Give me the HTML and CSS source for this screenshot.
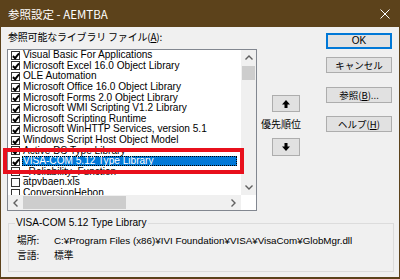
FILE: index.html
```html
<!DOCTYPE html>
<html lang="ja">
<head>
    <meta charset="UTF-8">
    <title>参照設定 - AEMTBA</title>
    <link rel="stylesheet" href="styles.css">
</head>
<body>
    <div class="window">
        <div class="titlebar">
            <span class="title">参照設定 - AEMTBA</span>
            <svg class="close" width="10" height="10" viewBox="0 0 10 10">
                <path d="M0.5 0.5 L9.5 9.5 M9.5 0.5 L0.5 9.5" stroke="#fff" stroke-width="1" fill="none"/>
            </svg>
        </div>

        <div class="content">
            <div class="main">
                <div class="left">
                    <div class="list-label">参照可能なライブラリ ファイル(<u>A</u>):</div>
                    <div class="listbox">
                        <div class="list-top">
                            <div class="rows">
                                <div class="row"><span class="check on"></span><span class="item">Visual Basic For Applications</span></div>
                                <div class="row"><span class="check on"></span><span class="item">Microsoft Excel 16.0 Object Library</span></div>
                                <div class="row"><span class="check on"></span><span class="item">OLE Automation</span></div>
                                <div class="row"><span class="check on"></span><span class="item">Microsoft Office 16.0 Object Library</span></div>
                                <div class="row"><span class="check on"></span><span class="item">Microsoft Forms 2.0 Object Library</span></div>
                                <div class="row"><span class="check on"></span><span class="item">Microsoft WMI Scripting V1.2 Library</span></div>
                                <div class="row"><span class="check on"></span><span class="item">Microsoft Scripting Runtime</span></div>
                                <div class="row"><span class="check on"></span><span class="item">Microsoft WinHTTP Services, version 5.1</span></div>
                                <div class="row"><span class="check on"></span><span class="item">Windows Script Host Object Model</span></div>
                                <div class="row"><span class="check on"></span><span class="item">Active DS Type Library</span></div>
                                <div class="row selected"><span class="check on"></span><span class="item">VISA-COM 5.12 Type Library</span></div>
                                <div class="row"><span class="check"></span><span class="item">_Reliability_Function</span></div>
                                <div class="row"><span class="check"></span><span class="item">atpvbaen.xls</span></div>
                                <div class="row"><span class="check"></span><span class="item">ConversionHebon</span></div>
                            </div>
                            <div class="vscroll">
                                <div class="arrow">
                                    <svg width="8" height="5" viewBox="0 0 8 5"><path d="M0.5 4.5 L4 1 L7.5 4.5" stroke="#606060" stroke-width="1.4" fill="none"/></svg>
                                </div>
                                <div class="vthumb"></div>
                                <div class="vspace"></div>
                                <div class="arrow">
                                    <svg width="8" height="5" viewBox="0 0 8 5"><path d="M0.5 0.5 L4 4 L7.5 0.5" stroke="#606060" stroke-width="1.4" fill="none"/></svg>
                                </div>
                            </div>
                        </div>
                        <div class="hscroll">
                            <div class="arrow">
                                <svg width="5" height="8" viewBox="0 0 5 8"><path d="M4.5 0.5 L1 4 L4.5 7.5" stroke="#606060" stroke-width="1.4" fill="none"/></svg>
                            </div>
                            <div class="hthumb"></div>
                            <div class="hspace"></div>
                            <div class="arrow">
                                <svg width="5" height="8" viewBox="0 0 5 8"><path d="M0.5 0.5 L4 4 L0.5 7.5" stroke="#606060" stroke-width="1.4" fill="none"/></svg>
                            </div>
                            <div class="corner"></div>
                        </div>
                    </div>
                </div>

                <div class="priority">
                    <button class="btn move">
                        <svg width="8" height="8" viewBox="0 0 8 8"><path d="M4 0 L8 4.5 H5.5 V8 H2.5 V4.5 H0 Z" fill="#000"/></svg>
                    </button>
                    <div class="priority-label">優先順位</div>
                    <button class="btn move down">
                        <svg width="8" height="8" viewBox="0 0 8 8"><path d="M4 8 L8 3.5 H5.5 V0 H2.5 V3.5 H0 Z" fill="#000"/></svg>
                    </button>
                </div>

                <div class="buttons">
                    <button class="btn default">OK</button>
                    <button class="btn cancel">キャンセル</button>
                    <button class="btn browse">参照(<u>B</u>)...</button>
                    <button class="btn help">ヘルプ(<u>H</u>)</button>
                </div>
            </div>

            <fieldset class="info">
                <legend>VISA-COM 5.12 Type Library</legend>
                <div class="info-row"><span class="info-key">場所:</span><span>C:¥Program Files (x86)¥IVI Foundation¥VISA¥VisaCom¥GlobMgr.dll</span></div>
                <div class="info-row"><span class="info-key">言語:</span><span>標準</span></div>
            </fieldset>
        </div>

        <!-- annotation drawn over the screenshot -->
        <div class="mark"></div>
    </div>
</body>
</html>
```

FILE: styles.css
```css
:root {
    --frame: #5c421b;
    --face: #f0f0f0;
    --btn: #e1e1e1;
    --btn-border: #adadad;
    --select: #0078d7;
    --mark: #e8101c;
}

* {
    box-sizing: border-box;
    margin: 0;
    padding: 0;
}

body {
    width: 400px;
    height: 279px;
    overflow: hidden;
    font-family: "Liberation Sans", "Noto Sans CJK JP", sans-serif;
    font-size: 10px;
    color: #000;
}

.window {
    position: relative;
    width: 400px;
    height: 279px;
    background: var(--face);
    border: 1px solid var(--frame);
    border-top: none;
    border-bottom-width: 2px;
}

.titlebar {
    height: 27px;
    margin: 0 -1px;
    background: var(--frame);
    display: flex;
    align-items: center;
    justify-content: space-between;
    padding: 0 10px 0 8px;
}

.title {
    color: #fff;
    font-family: "Noto Sans CJK JP", sans-serif;
    font-size: 11.5px;
}

.content {
    padding: 0 0 0 6px;
}

.main {
    display: flex;
    height: 184px;
}

/* library list */
.left {
    width: 250px;
    padding-top: 4px;
}

.list-label {
    font-family: "Noto Sans CJK JP", sans-serif;
    font-size: 10px;
    line-height: 12px;
    height: 12px;
    margin: 0 0 6px 1px;
    letter-spacing: -0.2px;
}

.listbox {
    height: 162px;
    border: 1px solid #828790;
    background: #fff;
    display: flex;
    flex-direction: column;
}

.list-top {
    flex: 1;
    display: flex;
    min-height: 0;
}

.rows {
    flex: 1;
    overflow: hidden;
}

.row {
    display: flex;
    align-items: center;
    height: 10.6px;
    padding-left: 3px;
    font-size: 10.1px;
    white-space: nowrap;
}

.check {
    width: 9px;
    height: 9px;
    border: 1px solid #333;
    background: #fff;
    margin-right: 2px;
    flex: none;
    position: relative;
}

.check.on::after {
    content: '';
    position: absolute;
    left: 2px;
    top: 0;
    width: 2px;
    height: 5px;
    border: solid #000;
    border-width: 0 2px 2px 0;
    transform: rotate(40deg);
}

.item {
    flex: 1;
    line-height: 10px;
    padding-left: 1px;
    margin-right: 4px;
    overflow: hidden;
}

.row.selected .item {
    background: var(--select);
    color: #fff;
    outline: 1px dotted #000;
    outline-offset: -1px;
}

.vscroll {
    width: 15px;
    background: var(--face);
    display: flex;
    flex-direction: column;
}

.arrow {
    width: 15px;
    height: 15px;
    display: flex;
    align-items: center;
    justify-content: center;
    flex: none;
}

.vthumb {
    height: 14px;
    margin: 1px 1px 0;
    background: #cdcdcd;
}

.vspace,
.hspace {
    flex: 1;
}

.hscroll {
    height: 15px;
    background: var(--face);
    display: flex;
}

.hthumb {
    width: 103px;
    margin: 1px 0;
    background: #cdcdcd;
}

.corner {
    width: 15px;
    background: #fff;
}

/* buttons */
.btn {
    font-family: "Noto Sans CJK JP", sans-serif;
    font-size: 9.5px;
    line-height: 14px;
    color: #000;
    background: var(--btn);
    border: 1px solid var(--btn-border);
    display: flex;
    align-items: center;
    justify-content: center;
}

.priority {
    width: 40px;
    margin-left: 4px;
    padding-top: 68px;
    display: flex;
    flex-direction: column;
}

.btn.move {
    width: 28px;
    height: 17px;
    margin-left: 11px;
}

.btn.move.down {
    height: 18px;
    margin-top: 8px;
}

.priority-label {
    font-family: "Noto Sans CJK JP", sans-serif;
    font-size: 10px;
    line-height: 12px;
    margin-top: 6px;
    white-space: nowrap;
}

.buttons {
    margin-left: 25px;
    padding-top: 6px;
    display: flex;
    flex-direction: column;
}

.buttons .btn {
    width: 66px;
    height: 16px;
}

.btn.default {
    border: 2px solid var(--select);
    font-family: "Liberation Sans", sans-serif;
    font-size: 10px;
}

.btn.cancel {
    margin-top: 8px;
}

.btn.browse {
    margin-top: 14px;
}

.btn.help {
    margin-top: 13px;
}

/* selected library details */
.info {
    width: 386px;
    height: 55px;
    margin-top: 6px;
    margin-left: 1px;
    border: 1px solid #dcdcdc;
    padding: 4px 8px 0;
}

.info legend {
    font-size: 10.1px;
    line-height: 12px;
    padding: 0 1px;
    margin-left: -2px;
}

.info-row {
    display: flex;
    line-height: 15px;
    font-size: 9.8px;
    white-space: nowrap;
}

.info-key {
    width: 37px;
    font-family: "Noto Sans CJK JP", sans-serif;
}

.info-row span:last-child {
    font-family: "Liberation Sans", "Noto Sans CJK JP", sans-serif;
}

.mark {
    position: absolute;
    left: 2px;
    top: 148px;
    width: 241px;
    height: 26px;
    border: 4px solid var(--mark);
}
```
